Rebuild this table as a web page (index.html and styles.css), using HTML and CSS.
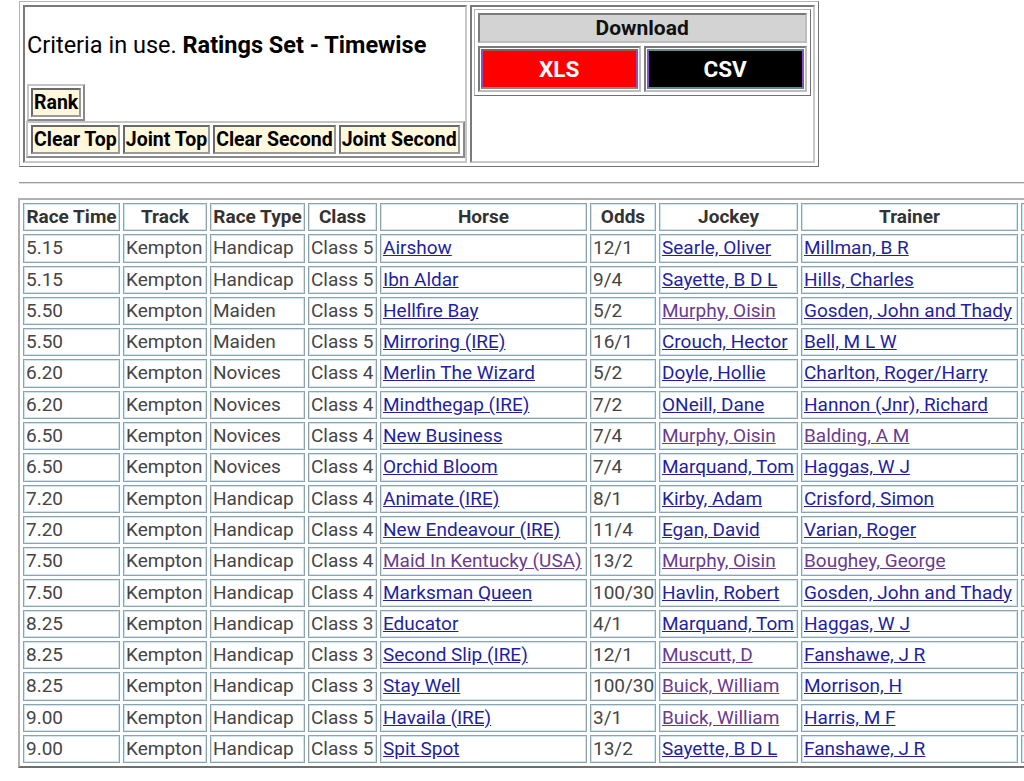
FILE: index.html
```html
<!DOCTYPE html>
<html lang="en">
<head>
<meta charset="utf-8">
<title>Ratings Set - Timewise</title>
<link rel="stylesheet" href="styles.css">
</head>
<body>
<div class="page">
  <table class="top">
    <tr>
      <td class="top-cell criteria-cell">
        <p class="criteria">Criteria in use. <b>Ratings Set - Timewise</b></p>
        <table class="btn-table rank-table">
          <tr><td class="btn">Rank</td></tr>
        </table>
        <table class="btn-table btn-row">
          <tr>
            <td class="btn">Clear Top</td>
            <td class="btn">Joint Top</td>
            <td class="btn">Clear Second</td>
            <td class="btn">Joint Second</td>
          </tr>
        </table>
      </td>
      <td class="top-cell download-cell">
        <table class="dl">
          <tr><td class="dl-head" colspan="2">Download</td></tr>
          <tr>
            <td class="dl-cell"><div class="dl-btn xls">XLS</div></td>
            <td class="dl-cell"><div class="dl-btn csv">CSV</div></td>
          </tr>
        </table>
      </td>
    </tr>
  </table>
  <hr class="rule">
  <table class="races">
    <thead>
      <tr>
        <th class="c-time">Race Time</th>
        <th class="c-track">Track</th>
        <th class="c-type">Race Type</th>
        <th class="c-class">Class</th>
        <th class="c-horse">Horse</th>
        <th class="c-odds">Odds</th>
        <th class="c-jockey">Jockey</th>
        <th class="c-trainer">Trainer</th>
        <th class="c-more"></th>
      </tr>
    </thead>
    <tbody>
      <tr><td>5.15</td><td>Kempton</td><td>Handicap</td><td>Class 5</td><td><a href="#">Airshow</a></td><td>12/1</td><td><a href="#">Searle, Oliver</a></td><td><a href="#">Millman, B R</a></td><td></td></tr>
      <tr><td>5.15</td><td>Kempton</td><td>Handicap</td><td>Class 5</td><td><a href="#">Ibn Aldar</a></td><td>9/4</td><td><a href="#">Sayette, B D L</a></td><td><a href="#">Hills, Charles</a></td><td></td></tr>
      <tr><td>5.50</td><td>Kempton</td><td>Maiden</td><td>Class 5</td><td><a href="#">Hellfire Bay</a></td><td>5/2</td><td><a class="v" href="#">Murphy, Oisin</a></td><td><a href="#">Gosden, John and Thady</a></td><td></td></tr>
      <tr><td>5.50</td><td>Kempton</td><td>Maiden</td><td>Class 5</td><td><a href="#">Mirroring (IRE)</a></td><td>16/1</td><td><a href="#">Crouch, Hector</a></td><td><a href="#">Bell, M L W</a></td><td></td></tr>
      <tr><td>6.20</td><td>Kempton</td><td>Novices</td><td>Class 4</td><td><a href="#">Merlin The Wizard</a></td><td>5/2</td><td><a href="#">Doyle, Hollie</a></td><td><a href="#">Charlton, Roger/Harry</a></td><td></td></tr>
      <tr><td>6.20</td><td>Kempton</td><td>Novices</td><td>Class 4</td><td><a href="#">Mindthegap (IRE)</a></td><td>7/2</td><td><a href="#">ONeill, Dane</a></td><td><a href="#">Hannon (Jnr), Richard</a></td><td></td></tr>
      <tr><td>6.50</td><td>Kempton</td><td>Novices</td><td>Class 4</td><td><a href="#">New Business</a></td><td>7/4</td><td><a class="v" href="#">Murphy, Oisin</a></td><td><a class="v" href="#">Balding, A M</a></td><td></td></tr>
      <tr><td>6.50</td><td>Kempton</td><td>Novices</td><td>Class 4</td><td><a href="#">Orchid Bloom</a></td><td>7/4</td><td><a href="#">Marquand, Tom</a></td><td><a href="#">Haggas, W J</a></td><td></td></tr>
      <tr><td>7.20</td><td>Kempton</td><td>Handicap</td><td>Class 4</td><td><a href="#">Animate (IRE)</a></td><td>8/1</td><td><a href="#">Kirby, Adam</a></td><td><a href="#">Crisford, Simon</a></td><td></td></tr>
      <tr><td>7.20</td><td>Kempton</td><td>Handicap</td><td>Class 4</td><td><a href="#">New Endeavour (IRE)</a></td><td>11/4</td><td><a href="#">Egan, David</a></td><td><a href="#">Varian, Roger</a></td><td></td></tr>
      <tr><td>7.50</td><td>Kempton</td><td>Handicap</td><td>Class 4</td><td><a class="v" href="#">Maid In Kentucky (USA)</a></td><td>13/2</td><td><a class="v" href="#">Murphy, Oisin</a></td><td><a class="v" href="#">Boughey, George</a></td><td></td></tr>
      <tr><td>7.50</td><td>Kempton</td><td>Handicap</td><td>Class 4</td><td><a href="#">Marksman Queen</a></td><td>100/30</td><td><a href="#">Havlin, Robert</a></td><td><a href="#">Gosden, John and Thady</a></td><td></td></tr>
      <tr><td>8.25</td><td>Kempton</td><td>Handicap</td><td>Class 3</td><td><a href="#">Educator</a></td><td>4/1</td><td><a href="#">Marquand, Tom</a></td><td><a href="#">Haggas, W J</a></td><td></td></tr>
      <tr><td>8.25</td><td>Kempton</td><td>Handicap</td><td>Class 3</td><td><a href="#">Second Slip (IRE)</a></td><td>12/1</td><td><a class="v" href="#">Muscutt, D</a></td><td><a href="#">Fanshawe, J R</a></td><td></td></tr>
      <tr><td>8.25</td><td>Kempton</td><td>Handicap</td><td>Class 3</td><td><a href="#">Stay Well</a></td><td>100/30</td><td><a class="v" href="#">Buick, William</a></td><td><a href="#">Morrison, H</a></td><td></td></tr>
      <tr><td>9.00</td><td>Kempton</td><td>Handicap</td><td>Class 5</td><td><a href="#">Havaila (IRE)</a></td><td>3/1</td><td><a class="v" href="#">Buick, William</a></td><td><a href="#">Harris, M F</a></td><td></td></tr>
      <tr><td>9.00</td><td>Kempton</td><td>Handicap</td><td>Class 5</td><td><a href="#">Spit Spot</a></td><td>13/2</td><td><a href="#">Sayette, B D L</a></td><td><a href="#">Fanshawe, J R</a></td><td></td></tr>
    </tbody>
  </table>
</div>
</body>
</html>
```
FILE: styles.css
```css
html {
  overflow: hidden;
}
body {
  margin: 0;
  background: #ffffff;
  color: #000000;
  font-family: Roboto, "Liberation Sans", sans-serif;
}
.page {
  width: 1200px;
  padding: 1px 0 0 19px;
}

/* ---------- top panel ---------- */
.top {
  border-collapse: separate;
  border-spacing: 3px;
  border: 1px solid;
  border-color: #b4b4b4 #707070 #707070 #b4b4b4;
  width: 799px;
  height: 166px;
}
.top-cell {
  box-sizing: border-box;
  border: 2px solid;
  border-color: #7a7a7a #c8c8c8 #c8c8c8 #7a7a7a;
  padding: 0;
  vertical-align: top;
}
.criteria-cell {
  width: 444px;
}
.criteria {
  margin: 0;
  padding: 25px 0 0 2px;
  font-size: 23.5px;
  line-height: 27px;
}
.btn-table {
  border-collapse: separate;
  border-spacing: 2px;
  border: 2px solid;
  border-color: #c4c4c4 #8a8a8a #8a8a8a #c4c4c4;
}
.rank-table {
  margin-top: 25px;
  margin-left: 2px;
}
.btn-row {
  margin-left: 1px;
  border-spacing: 3px 2px;
}
.btn {
  background: #fff8dc;
  border: 2px solid;
  border-color: #6a6a6a #9a9a9a #9a9a9a #6a6a6a;
  padding: 0 1px;
  font-size: 19.5px;
  font-weight: bold;
  line-height: 25px;
  white-space: nowrap;
}

.download-cell {
  padding: 2px;
}
.dl {
  border-collapse: separate;
  border-spacing: 3px;
  border: 1px solid;
  border-color: #b4b4b4 #707070 #707070 #b4b4b4;
  width: 337px;
}
.dl-head {
  background: #d3d3d3;
  border: 2px solid;
  border-color: #7a7a7a #bdbdbd #bdbdbd #7a7a7a;
  text-align: center;
  font-size: 21px;
  font-weight: bold;
  line-height: 26px;
  padding: 0;
  color: #111;
}
.dl-cell {
  border: 2px solid;
  border-color: #7a7a7a #bdbdbd #bdbdbd #7a7a7a;
  padding: 1px;
  width: 50%;
}
.dl-btn {
  border: 2px solid;
  color: #ffffff;
  font-size: 22.5px;
  font-weight: bold;
  text-align: center;
  line-height: 36px;
}
.xls {
  background: #ff0000;
  border-color: #8c5a5a #8a4fc8 #8a8a8a #8a4fc8;
}
.csv {
  background: #000000;
  border-color: #5e8e8e #8a4fc8 #5e8e8e #8a4fc8;
}

.rule {
  margin: 15px 0 0 0;
  height: 0;
  border: 0;
  border-top: 1px solid #9a9a9a;
  border-bottom: 1px solid #dedede;
}

/* ---------- races table ---------- */
.races {
  margin-top: 14px;
  margin-left: -1px;
  border-collapse: separate;
  border-spacing: 3px;
  border: 2px solid;
  border-color: #b0b0b0 #6e6e6e #6e6e6e #b0b0b0;
  table-layout: fixed;
  width: 1128px;
  font-size: 19px;
}
.races th,
.races td {
  box-sizing: border-box;
  border: 1px solid #8fa3ad;
  box-shadow: inset 0 0 0 1px #cde5f1;
  padding: 0 2px;
  line-height: 26.3px;
  white-space: nowrap;
  overflow: hidden;
}
.races th {
  color: #333333;
  font-weight: bold;
  text-align: center;
}
.races td {
  color: #454545;
  text-align: left;
}
.races a {
  color: #1f1fa3;
  text-decoration: underline;
}
.races a.v {
  color: #6a3b8e;
}
.c-time { width: 97px; }
.c-track { width: 84px; }
.c-type { width: 95px; }
.c-class { width: 69px; }
.c-horse { width: 207px; }
.c-odds { width: 66px; }
.c-jockey { width: 139px; }
.c-trainer { width: 217px; }
.c-more { width: 120px; }
```
